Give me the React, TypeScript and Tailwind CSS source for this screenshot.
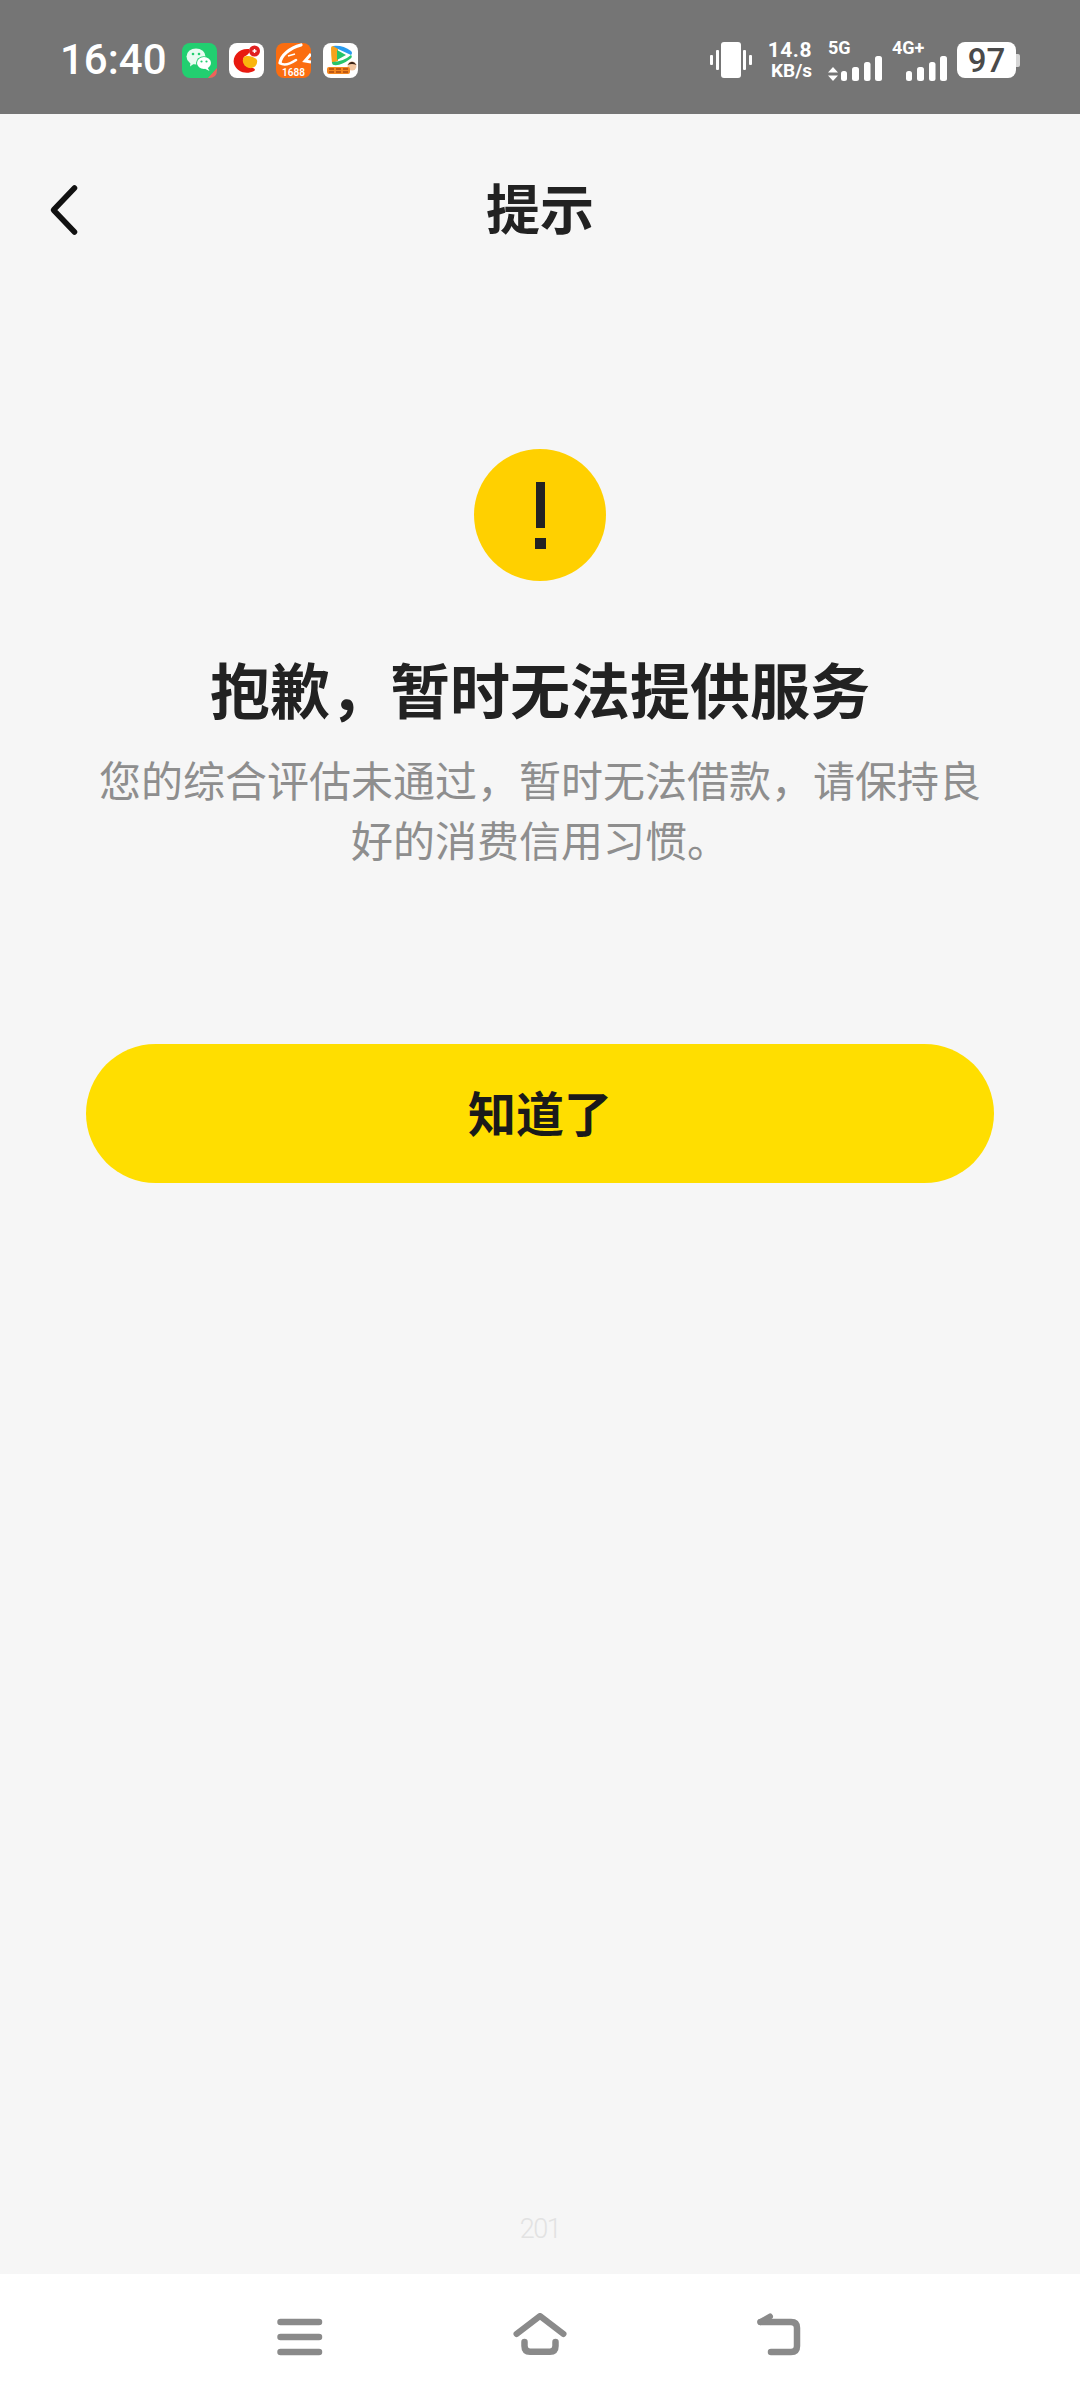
const cjk = { fontFamily: '"Noto Sans CJK SC", "Noto Sans", sans-serif' }

function WeChatIcon() {
  return (
    <svg width="35" height="35" viewBox="0 0 35 35">
      <rect width="35" height="35" rx="8" fill="#22cf70" />
      <path d="M26 35 L35 25 L35 27 Q35 35 27 35 Z" fill="#f0615a" />
      <ellipse cx="14" cy="13.5" rx="9.5" ry="8" fill="#e9fbf1" />
      <path d="M8.5 19 L8 23.5 L13 20 Z" fill="#e9fbf1" />
      <ellipse cx="22" cy="20" rx="8" ry="6.8" fill="#22cf70" />
      <ellipse cx="22" cy="20" rx="7" ry="6" fill="#ffffff" />
      <path d="M25.5 24.5 L27.5 28 L22.5 25.5 Z" fill="#ffffff" />
      <circle cx="11" cy="11" r="1.3" fill="#22cf70" />
      <circle cx="17" cy="11" r="1.3" fill="#22cf70" />
      <circle cx="19.5" cy="18.5" r="1.1" fill="#22cf70" />
      <circle cx="24.5" cy="18.5" r="1.1" fill="#22cf70" />
    </svg>
  )
}

function RedIcon() {
  return (
    <svg width="35" height="35" viewBox="0 0 35 35">
      <rect width="35" height="35" rx="8" fill="#ffffff" />
      <path d="M5 21 C3 13 10 5 20 6 C22 10 18 12 15 14 C13 18 16 23 21 24 C26 25 27 27 25 28 C17 32 8 29 5 21 Z" fill="#e81a10" />
      <path d="M15 14 C18 12 25 13 28 17 C29 22 25 26 20 25 C15 24 12 18 15 14 Z" fill="#fab50d" />
      <circle cx="25.5" cy="8" r="5.5" fill="#e02020" />
      <path d="M23.5 8 H27.5 M25.5 6 V10" stroke="#ffffff" strokeWidth="1.4" />
    </svg>
  )
}

function AlibabaIcon() {
  return (
    <svg width="35" height="35" viewBox="0 0 35 35">
      <rect width="35" height="35" rx="8" fill="#fb6d10" />
      <path d="M4 20 C5 12 14 5 25 2" stroke="#ffffff" strokeWidth="3.2" fill="none" strokeLinecap="round" />
      <path d="M4 20 C8 23 14 21 20 17" stroke="#ffffff" strokeWidth="2.6" fill="none" strokeLinecap="round" />
      <path d="M12 13 L19 11" stroke="#ffffff" strokeWidth="1.4" />
      <path d="M35 11 L29 18 L35 19" stroke="#ffffff" strokeWidth="3" fill="none" />
      <text x="17.5" y="32.5" textAnchor="middle" fontSize="10" fontWeight="600" fill="#ffffff" fontFamily="Roboto, sans-serif">1688</text>
    </svg>
  )
}

function VideoIcon() {
  return (
    <svg width="35" height="35" viewBox="0 0 35 35">
      <rect width="35" height="35" rx="8" fill="#ffffff" />
      <path d="M8 5 Q8 2.5 11 3 L15 4 L15 18 L9 20 Q8 12 8 5 Z" fill="#f7a21b" />
      <path d="M10 3 Q20 2 28 8 Q30 10 28 12 L15 6 Z" fill="#2a9cf0" />
      <path d="M9 19 Q20 19 28 12 Q30 14 27 16 Q18 23 11 22 Q9 22 9 19 Z" fill="#27c46a" />
      <path d="M14 7 L23 12 L14 17 Z" fill="#27c46a" />
      <circle cx="29" cy="23" r="4.5" fill="#f4c7a1" />
      <path d="M24.5 22 Q29 15.5 33.5 22 Q29 20 24.5 22 Z" fill="#3a2317" />
      <rect x="4" y="24" width="23" height="7" rx="2" fill="#f5871f" />
      <path d="M6 26 H11 M6 29 H11 M13 26 H18 M13 29 H18 M20 26 H25 M20 29 H25" stroke="#8a2c0a" strokeWidth="1.1" />
    </svg>
  )
}

function VibrateIcon() {
  return (
    <svg width="42" height="36" viewBox="0 0 42 36">
      <rect x="11" y="0" width="20" height="36" rx="3" fill="#ffffff" />
      <rect x="0" y="13" width="3" height="10" rx="1" fill="#ffffff" />
      <rect x="6" y="8" width="3" height="20" rx="1" fill="#ffffff" />
      <rect x="33" y="8" width="3" height="20" rx="1" fill="#ffffff" />
      <rect x="39" y="13" width="3" height="10" rx="1" fill="#ffffff" />
    </svg>
  )
}

function SignalBars() {
  return (
    <svg width="41" height="25" viewBox="0 0 41 25">
      <rect x="0" y="15" width="6" height="10" rx="2.5" fill="#ffffff" />
      <rect x="11" y="11" width="7" height="14" rx="2.5" fill="#ffffff" />
      <rect x="23" y="6" width="6.5" height="19" rx="2.5" fill="#ffffff" />
      <rect x="34" y="0" width="7" height="25" rx="2.5" fill="#ffffff" />
    </svg>
  )
}

function StatusBar() {
  return (
    <div className="flex h-[114px] items-center justify-between bg-[#757575] pt-[6px] pl-[60px] pr-[60px] text-white">
      <div className="flex items-center">
        <span className="w-[122px] text-[42px] leading-none font-medium" style={{ fontFamily: 'Roboto, sans-serif' }}>16:40</span>
        <div className="flex gap-[12px]">
          <WeChatIcon />
          <RedIcon />
          <AlibabaIcon />
          <VideoIcon />
        </div>
      </div>
      <div className="flex items-center font-['Roboto',sans-serif] font-bold">
        <VibrateIcon />
        <div className="ml-[13px] flex w-[47px] flex-col items-end">
          <span className="text-[21px] leading-[21px] tracking-[0.5px]">14.8</span>
          <span className="text-[19px] leading-[19px]">KB/s</span>
        </div>
        <div className="ml-[16px] flex w-[54px] flex-col">
          <span className="text-[18px] leading-[16px]">5G</span>
          <div className="flex h-[25px] items-end justify-between">
            <svg width="10" height="14" viewBox="0 0 10 14">
              <path d="M5 0 L10 5.5 H0 Z M0 8.5 H10 L5 14 Z" fill="#ffffff" />
            </svg>
            <SignalBars />
          </div>
        </div>
        <div className="ml-[10px] flex w-[55px] flex-col">
          <span className="text-[18px] leading-[16px]">4G+</span>
          <div className="flex h-[25px] items-end justify-end">
            <SignalBars />
          </div>
        </div>
        <div className="ml-[10px] flex items-center">
          <div className="flex h-[36px] w-[59px] items-center justify-center rounded-[8px] bg-white text-[33px] leading-none font-medium text-[#4a4a4a]">97</div>
          <div className="h-[13px] w-[4px] rounded-r-[2px] bg-[#d6d6d6]" />
        </div>
      </div>
    </div>
  )
}

function NavBar() {
  return (
    <div className="flex h-[126px] items-start justify-between bg-white pt-[39px] pl-[275px] pr-[276px]">
      <svg width="48" height="45" viewBox="0 0 48 45" fill="none" stroke="#8a8a8a" strokeWidth="6.5" strokeLinecap="round">
        <path d="M5.5 9 H44 M5.5 24 H44 M5.5 39 H44" />
      </svg>
      <svg width="58" height="45" viewBox="0 0 58 45" fill="none" stroke="#8a8a8a" strokeWidth="6" strokeLinecap="round" strokeLinejoin="round">
        <path d="M5.5 21 L29 3 L52.5 21" />
        <path d="M13.5 29 V33 Q13.5 38.7 19 38.7 H39 Q44.5 38.7 44.5 33 V29" strokeWidth="6.5" />
      </svg>
      <svg width="48" height="45" viewBox="0 0 48 45" fill="none" stroke="#8a8a8a" strokeWidth="6.5" strokeLinecap="round" strokeLinejoin="round">
        <path d="M4.5 9 H35 Q41 9 41 15 V33 Q41 39 35 39 H15" />
        <path d="M4.5 9 L14 3.5" strokeWidth="6" />
      </svg>
    </div>
  )
}

export default function App() {
  return (
    <div className="flex h-[2400px] w-[1080px] flex-col bg-[#f6f6f6] text-[#222222]" style={cjk}>
      <StatusBar />

      <div className="grid h-[188px] grid-cols-[1fr_auto_1fr] items-center pl-[46px]">
        <svg width="36" height="56" viewBox="0 0 36 56" className="mt-[4px]" fill="none" stroke="#111111" strokeWidth="5.5" strokeLinecap="round" strokeLinejoin="round">
          <path d="M28.5 6 L7.5 28 L28.5 50" />
        </svg>
        <h1 className="-mt-[2px] -ml-[46px] text-[54px] leading-none font-bold">提示</h1>
      </div>

      <div className="flex flex-1 flex-col items-center">
        <div className="mt-[147px] flex h-[132px] w-[132px] flex-col items-center justify-center gap-[10px] rounded-full bg-[#ffd000]">
          <div className="h-[46px] w-[9px] bg-[#222222]" />
          <div className="h-[11px] w-[11px] bg-[#222222]" />
        </div>
        <h2 className="mt-[67px] text-[60px] leading-[80px] font-bold">抱歉，暂时无法提供服务</h2>
        <p className="mt-[21px] w-[900px] text-center text-[42px] leading-[60px] text-[#8e8e8e]">
          您的综合评估未通过，暂时无法借款，请保持良好的消费信用习惯。
        </p>
        <button className="mt-[175px] h-[139px] w-[908px] rounded-full bg-[#ffde00] text-[48px] font-bold text-[#1a1a1a]">
          <span className="relative -top-[3px]">知道了</span>
        </button>
        <span className="mt-auto mb-[25px] text-[27px] leading-[40px] font-light tracking-[-1.5px] text-[#e2e2e2]" style={{ fontFamily: 'Roboto, sans-serif' }}>201</span>
      </div>

      <NavBar />
    </div>
  )
}
